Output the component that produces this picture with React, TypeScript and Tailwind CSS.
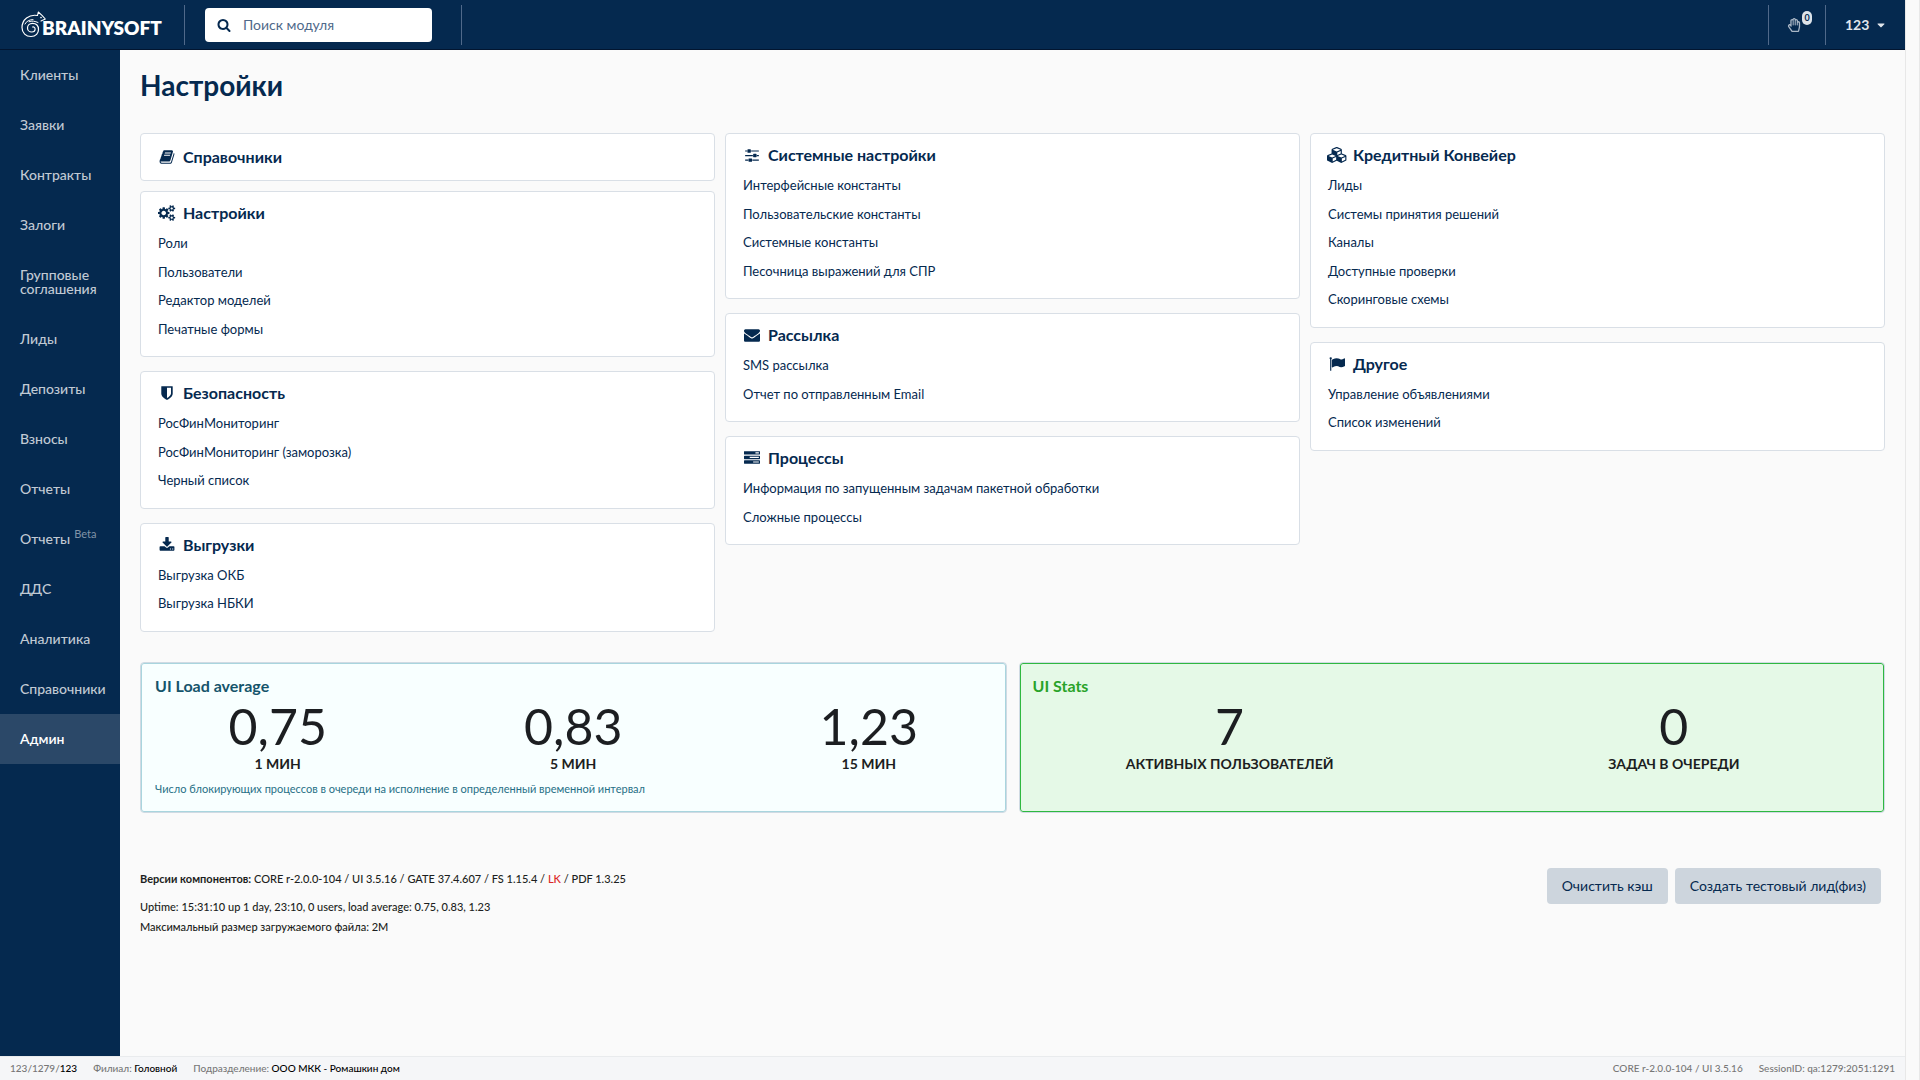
import { FaCaretDown, FaRegHandPaper } from 'react-icons/fa'

interface IconShape {
  viewBox: string
  path: string
}

interface Section {
  title: string
  icon: IconShape
  links: string[]
}

interface Stat {
  value: string
  label: string
}

const icons = {
  search: {
    viewBox: '0 0 1792 1792',
    path: 'M1216 832q0-185-131.5-316.5t-316.5-131.5-316.5 131.5-131.5 316.5 131.5 316.5 316.5 131.5 316.5-131.5 131.5-316.5zm512 832q0 52-38 90t-90 38q-54 0-90-38l-343-342q-179 124-399 124-143 0-273.5-55.5t-225-150-150-225-55.5-273.5 55.5-273.5 150-225 225-150 273.5-55.5 273.5 55.5 225 150 150 225 55.5 273.5q0 220-124 399l343 343q37 37 37 90z',
  },
  book: {
    viewBox: '0 0 1792 1792',
    path: 'M1703 478q40 57 18 129l-275 906q-19 64-76.5 107.5t-122.5 43.5h-923q-77 0-148.5-53.5t-99.5-131.5q-24-67-2-127 0-4 3-27t4-37q1-8-3-21.5t-3-19.5q2-11 8-21t16.5-23.5 16.5-23.5q23-38 45-91.5t30-91.5q3-10 .5-30t-.5-28q3-11 17-28t17-23q21-36 42-92t25-90q1-9-2.5-32t.5-28q4-13 22-30.5t22-22.5q19-26 42.5-84.5t27.5-96.5q1-8-3-25.5t-2-26.5q2-8 9-18t18-23 17-21q8-12 16.5-30.5t15-35 16-36 19.5-32 26.5-23.5 36-11.5 47.5 5.5l-1 3q38-9 51-9h761q74 0 114 56t18 130l-274 906q-36 119-71.5 153.5t-128.5 34.5h-869q-27 0-38 15-11 16-1 43 24 70 144 70h923q29 0 56-15.5t35-41.5l300-987q7-22 5-57 38 15 59 43zm-1064 2q-4 13 2 22.5t20 9.5h608q13 0 25.5-9.5t16.5-22.5l21-64q4-13-2-22.5t-20-9.5h-608q-13 0-25.5 9.5t-16.5 22.5zm-83 256q-4 13 2 22.5t20 9.5h608q13 0 25.5-9.5t16.5-22.5l21-64q4-13-2-22.5t-20-9.5h-608q-13 0-25.5 9.5t-16.5 22.5z',
  },
  cogs: {
    viewBox: '0 0 1920 1792',
    path: 'M896 896q0-106-75-181t-181-75-181 75-75 181 75 181 181 75 181-75 75-181zm768 512q0-52-38-90t-90-38-90 38-38 90q0 53 37.5 90.5t90.5 37.5 90.5-37.5 37.5-90.5zm0-1024q0-52-38-90t-90-38-90 38-38 90q0 53 37.5 90.5t90.5 37.5 90.5-37.5 37.5-90.5zm-384 421v185q0 10-7 19.5t-16 10.5l-155 24q-11 35-32 76 34 48 90 115 7 11 7 20 0 12-7 19-23 30-82.5 89.5t-78.5 59.5q-11 0-21-7l-115-90q-37 19-77 31-11 108-23 155-7 24-30 24h-186q-11 0-20-7.5t-10-17.5l-23-153q-34-10-75-31l-118 89q-7 7-20 7-11 0-21-8-144-133-144-160 0-9 7-19 10-14 41-53t47-61q-23-44-35-82l-152-24q-10-1-17-9.5t-7-19.5v-185q0-10 7-19.5t16-10.5l155-24q11-35 32-76-34-48-90-115-7-11-7-20 0-12 7-20 22-30 82-89t79-59q11 0 21 7l115 90q34-18 77-32 11-108 23-154 7-24 30-24h186q11 0 20 7.5t10 17.5l23 153q34 10 75 31l118-89q8-7 20-7 11 0 21 8 144 133 144 160 0 8-7 19-12 16-42 54t-45 60q23 48 34 82l152 23q10 2 17 10.5t7 19.5zm640 533v140q0 16-149 31-12 27-30 52 51 113 51 138 0 4-4 7-122 71-124 71-8 0-46-47t-52-68q-20 2-30 2t-30-2q-14 21-52 68t-46 47q-2 0-124-71-4-3-4-7 0-25 51-138-18-25-30-52-149-15-149-31v-140q0-16 149-31 13-29 30-52-51-113-51-138 0-4 4-7 4-2 35-20t59-34 30-16q8 0 46 46.5t52 67.5q20-2 30-2t30 2q51-71 92-112l6-2q4 0 124 70 4 3 4 7 0 25-51 138 17 23 30 52 149 15 149 31zm0-1024v140q0 16-149 31-12 27-30 52 51 113 51 138 0 4-4 7-122 71-124 71-8 0-46-47t-52-68q-20 2-30 2t-30-2q-14 21-52 68t-46 47q-2 0-124-71-4-3-4-7 0-25 51-138-18-25-30-52-149-15-149-31v-140q0-16 149-31 13-29 30-52-51-113-51-138 0-4 4-7 4-2 35-20t59-34 30-16q8 0 46 46.5t52 67.5q20-2 30-2t30 2q51-71 92-112l6-2q4 0 124 70 4 3 4 7 0 25-51 138 17 23 30 52 149 15 149 31z',
  },
  shield: {
    viewBox: '0 0 1792 1792',
    path: 'M1344 960v-640h-448v1137q119-63 213-137 235-184 235-360zm192-768v768q0 86-33.5 170.5t-83 150-118 127.5-126.5 103-121 77.5-89.5 49.5-42.5 20q-12 6-26 6t-26-6q-16-7-42.5-20t-89.5-49.5-121-77.5-126.5-103-118-127.5-83-150-33.5-170.5v-768q0-26 19-45t45-19h1152q26 0 45 19t19 45z',
  },
  download: {
    viewBox: '0 0 1792 1792',
    path: 'M1344 1344q0-26-19-45t-45-19-45 19-19 45 19 45 45 19 45-19 19-45zm256 0q0-26-19-45t-45-19-45 19-19 45 19 45 45 19 45-19 19-45zm128-224v320q0 40-28 68t-68 28h-1472q-40 0-68-28t-28-68v-320q0-40 28-68t68-28h465l135 136q58 56 136 56t136-56l136-136h464q40 0 68 28t28 68zm-325-569q17 41-14 70l-448 448q-18 19-45 19t-45-19l-448-448q-31-29-14-70 17-39 59-39h256v-448q0-26 19-45t45-19h256q26 0 45 19t19 45v448h256q42 0 59 39z',
  },
  sliders: {
    viewBox: '0 0 1792 1792',
    path: 'M480 1408v128h-352v-128h352zm352-128q26 0 45 19t19 45v256q0 26-19 45t-45 19h-256q-26 0-45-19t-19-45v-256q0-26 19-45t45-19h256zm160-384v128h-864v-128h864zm-640-512v128h-224v-128h224zm1312 1024v128h-736v-128h736zm-960-1152q26 0 45 19t19 45v256q0 26-19 45t-45 19h-256q-26 0-45-19t-19-45v-256q0-26 19-45t45-19h256zm640 512q26 0 45 19t19 45v256q0 26-19 45t-45 19h-256q-26 0-45-19t-19-45v-256q0-26 19-45t45-19h256zm320 128v128h-224v-128h224zm0-512v128h-864v-128h864z',
  },
  envelope: {
    viewBox: '0 0 1792 1792',
    path: 'M1792 710v794q0 66-47 113t-113 47h-1472q-66 0-113-47t-47-113v-794q44 49 101 87 362 246 497 345 57 42 92.5 65.5t94.5 48 110 24.5h2q51 0 110-24.5t94.5-48 92.5-65.5q170-123 498-345 57-39 100-87zm0-294q0 79-49 151t-122 123q-376 261-468 325-10 7-42.5 30.5t-54 38-52 32.5-57.5 27-50 9h-2q-23 0-50-9t-57.5-27-52-32.5-54-38-42.5-30.5q-91-64-262-182.5t-205-142.5q-62-42-117-115.5t-55-136.5q0-78 41.5-130t118.5-52h1472q65 0 112.5 47t47.5 113z',
  },
  tasks: {
    viewBox: '0 0 1792 1792',
    path: 'M1024 1408h640v-128h-640v128zm-384-512h1024v-128h-1024v128zm640-512h384v-128h-384v128zm512 832v256q0 26-19 45t-45 19h-1664q-26 0-45-19t-19-45v-256q0-26 19-45t45-19h1664q26 0 45 19t19 45zm0-512v256q0 26-19 45t-45 19h-1664q-26 0-45-19t-19-45v-256q0-26 19-45t45-19h1664q26 0 45 19t19 45zm0-512v256q0 26-19 45t-45 19h-1664q-26 0-45-19t-19-45v-256q0-26 19-45t45-19h1664q26 0 45 19t19 45z',
  },
  cubes: {
    viewBox: '0 0 2304 1792',
    path: 'M640 1632l384-192v-314l-384 164v342zm-64-454l404-173-404-173-404 173zm1088 454l384-192v-314l-384 164v342zm-64-454l404-173-404-173-404 173zm-448-293l384-165v-266l-384 164v267zm-64-379l441-189-441-189-441 189zm1088 518v416q0 36-19 67t-52 47l-448 224q-25 14-57 14t-57-14l-448-224q-4-2-7-4-2 2-7 4l-448 224q-25 14-57 14t-57-14l-448-224q-33-16-52-47t-19-67v-416q0-38 21.5-70t56.5-48l434-186v-400q0-38 21.5-70t56.5-48l448-192q23-10 50-10t50 10l448 192q35 16 56.5 48t21.5 70v400l434 186q36 16 57 48t21 70z',
  },
  flag: {
    viewBox: '0 0 1792 1792',
    path: 'M320 256q0 72-64 110v1266q0 13-9.5 22.5t-22.5 9.5h-64q-13 0-22.5-9.5t-9.5-22.5v-1266q-64-38-64-110 0-53 37.5-90.5t90.5-37.5 90.5 37.5 37.5 90.5zm1472 64v763q0 25-12.5 38.5t-39.5 27.5q-215 116-369 116-61 0-123.5-22t-108.5-48-115.5-48-142.5-22q-192 0-464 146-17 9-33 9-26 0-45-19t-19-45v-742q0-32 31-55 21-14 79-43 236-120 421-120 107 0 200 29t219 88q38 19 88 19 54 0 117.5-21t110-47 88-47 54.5-21q26 0 45 19t19 45z',
  },
}

const navItems = [
  'Клиенты',
  'Заявки',
  'Контракты',
  'Залоги',
  'Групповые соглашения',
  'Лиды',
  'Депозиты',
  'Взносы',
  'Отчеты',
  'Отчеты Beta',
  'ДДС',
  'Аналитика',
  'Справочники',
  'Админ',
]

const columns: Section[][] = [
  [
    { title: 'Справочники', icon: icons.book, links: [] },
    {
      title: 'Настройки',
      icon: icons.cogs,
      links: ['Роли', 'Пользователи', 'Редактор моделей', 'Печатные формы'],
    },
    {
      title: 'Безопасность',
      icon: icons.shield,
      links: ['РосФинМониторинг', 'РосФинМониторинг (заморозка)', 'Черный список'],
    },
    { title: 'Выгрузки', icon: icons.download, links: ['Выгрузка ОКБ', 'Выгрузка НБКИ'] },
  ],
  [
    {
      title: 'Системные настройки',
      icon: icons.sliders,
      links: [
        'Интерфейсные константы',
        'Пользовательские константы',
        'Системные константы',
        'Песочница выражений для СПР',
      ],
    },
    {
      title: 'Рассылка',
      icon: icons.envelope,
      links: ['SMS рассылка', 'Отчет по отправленным Email'],
    },
    {
      title: 'Процессы',
      icon: icons.tasks,
      links: ['Информация по запущенным задачам пакетной обработки', 'Сложные процессы'],
    },
  ],
  [
    {
      title: 'Кредитный Конвейер',
      icon: icons.cubes,
      links: [
        'Лиды',
        'Системы принятия решений',
        'Каналы',
        'Доступные проверки',
        'Скоринговые схемы',
      ],
    },
    {
      title: 'Другое',
      icon: icons.flag,
      links: ['Управление объявлениями', 'Список изменений'],
    },
  ],
]

const loadStats: Stat[] = [
  { value: '0,75', label: '1 МИН' },
  { value: '0,83', label: '5 МИН' },
  { value: '1,23', label: '15 МИН' },
]

const uiStats: Stat[] = [
  { value: '7', label: 'АКТИВНЫХ ПОЛЬЗОВАТЕЛЕЙ' },
  { value: '0', label: 'ЗАДАЧ В ОЧЕРЕДИ' },
]

function Icon({ shape, className }: { shape: IconShape; className: string }) {
  return (
    <svg viewBox={shape.viewBox} fill="currentColor" aria-hidden="true" className={className}>
      <path d={shape.path} />
    </svg>
  )
}

function Logo() {
  return (
    <a href="#" className="flex w-[142px] items-end text-white">
      {/* chameleon with a curled tail */}
      <svg
        viewBox="0 0 25 27"
        fill="none"
        stroke="currentColor"
        strokeLinecap="round"
        strokeLinejoin="round"
        aria-hidden="true"
        className="-mr-1 h-[27px] w-[25px] shrink-0"
      >
        <path
          strokeWidth="1.2"
          d="M16.500 4.500C8 3 1 8.500 1 16.500C1 22 5 25.500 10 25.500C15 25.500 17.500 22 17.500 18.500C17.500 14.500 15 12.300 11.500 12.300C8.500 12.300 6.500 14.400 6.500 16.900C6.500 19.400 8.500 21 10.800 21C13 21 14.100 19.500 14.100 18C14.100 16.600 13 15.700 11.600 16"
        />
        <path strokeWidth="1.1" d="M16.500 4.500L17.300 1L21 4.300L24.300 8L20 10" />
        <path strokeWidth="1" d="M4 13C5.500 10 8.500 8.600 12 8.600M8 10.700C11 9.500 14 10.200 17 11.500" />
        <circle cx="20" cy="6.600" r="0.800" fill="currentColor" stroke="none" />
      </svg>
      <span className="text-[19px]/5 font-extrabold">BRAINYSOFT</span>
    </a>
  )
}

function Header() {
  return (
    <header className="flex h-[50px] items-center border-b border-[#021530] bg-[#05294f] pl-[21px]">
      <Logo />
      <div className="ml-[21px] h-10 w-px bg-[#50698a]" />
      <label className="ml-5 flex h-[34px] w-[227px] items-center rounded bg-white pl-3">
        <Icon shape={icons.search} className="h-[14px] w-[14px] text-[#05294f]" />
        <input
          type="text"
          aria-label="Поиск модуля"
          placeholder="Поиск модуля"
          className="ml-3 min-w-0 flex-1 text-sm text-[#05294f] outline-none placeholder:text-[#50698a]"
        />
      </label>
      <div className="ml-[29px] h-10 w-px bg-[#50698a]" />
      <div className="ml-auto flex h-10 items-center">
        <button
          type="button"
          aria-label="Уведомления"
          className="relative flex h-10 w-[57px] items-center border-l border-[#50698a] pl-[18px]"
        >
          <FaRegHandPaper className="h-[14px] w-[14px] text-[#a9b6c5]" />
          <span className="absolute top-[6px] left-[33px] flex h-[14px] w-[10px] items-center justify-center rounded-full bg-[#dde3ea] text-[9px] font-bold text-[#05294f]">
            0
          </span>
        </button>
        <button
          type="button"
          className="flex h-10 w-20 items-center gap-[6px] border-l border-[#50698a] pl-[19px] text-sm font-bold text-[#e1e6ec]"
        >
          123
          <FaCaretDown className="h-3 w-3" />
        </button>
      </div>
    </header>
  )
}

function Sidebar() {
  return (
    <nav className="w-[120px] shrink-0 bg-[#05294f]">
      {navItems.map((item) => (
        <a
          key={item}
          href="#"
          className={
            item === 'Админ'
              ? 'flex items-center bg-[#2b4868] px-5 py-[18px] text-sm/[14px] font-semibold text-white'
              : 'flex items-center px-5 py-[18px] text-sm/[14px] font-medium text-[#c1cad4]'
          }
        >
          {item === 'Отчеты Beta' ? (
            <>
              Отчеты
              <sup className="ml-1 text-[11px]/[14px] font-normal text-[#8294a8]">Beta</sup>
            </>
          ) : (
            item
          )}
        </a>
      ))}
    </nav>
  )
}

function SectionCard({ section }: { section: Section }) {
  const isPlain = section.links.length === 0

  return (
    <section
      className={
        isPlain
          ? 'mb-[10px] rounded border border-[#d9dfe6] bg-white px-[17px] py-[11px]'
          : 'mb-[14px] rounded border border-[#d9dfe6] bg-white px-[17px] pt-[9px] pb-3'
      }
    >
      <h2 className="flex items-center gap-[7px] text-base font-bold">
        <span className="flex w-[18px] shrink-0 justify-center">
          <Icon shape={section.icon} className="h-4 w-auto shrink-0" />
        </span>
        {isPlain ? <a href="#">{section.title}</a> : section.title}
      </h2>
      {!isPlain && (
        <ul className="mt-[5px] text-[13px] leading-normal">
          {section.links.map((link) => (
            <li key={link} className="pt-1 pb-[5px]">
              <a href="#">{link}</a>
            </li>
          ))}
        </ul>
      )}
    </section>
  )
}

function StatRow({ stats }: { stats: Stat[] }) {
  return (
    <div className="-mx-[25px] flex text-center text-[#1c1e21]">
      {stats.map((stat) => (
        <div key={stat.label} className="flex-1">
          <p className="text-[50px]/[56px]">{stat.value}</p>
          <p className="text-sm/5 font-bold">{stat.label}</p>
        </div>
      ))}
    </div>
  )
}

export default function App() {
  return (
    <div className="flex min-h-screen bg-[#fafafa] font-['Lato',sans-serif] text-[#05294f]">
      <div className="flex min-w-0 flex-1 flex-col">
        <Header />

        <div className="flex flex-1">
          <Sidebar />

          <main className="min-w-0 flex-1 px-5 pt-[17px]">
            <h1 className="text-[28px]/9 font-bold">Настройки</h1>

            <div className="mt-[30px] grid grid-cols-3 gap-[10px]">
              {columns.map((column) => (
                <div key={column[0].title}>
                  {column.map((section) => (
                    <SectionCard key={section.title} section={section} />
                  ))}
                </div>
              ))}
            </div>

            <div className="mt-4 grid grid-cols-2 gap-3">
              <section className="overflow-hidden rounded border border-[#d0dae3] bg-[#f8ffff] px-[14px] pt-[11px] pb-[15px] shadow-[inset_0_0_0_1px_#a9d5de]">
                <h2 className="text-base font-bold text-[#15546b]">UI Load average</h2>
                <StatRow stats={loadStats} />
                <p className="mt-[7px] text-[11px]/4 text-[#276f86]">
                  Число блокирующих процессов в очереди на исполнение в определенный временной
                  интервал
                </p>
              </section>
              <section className="overflow-hidden rounded border border-[#d0dae3] bg-[#e5f9e7] px-[13px] pt-[11px] shadow-[inset_0_0_0_1px_#2eb840]">
                <h2 className="text-base font-bold text-[#29a329]">UI Stats</h2>
                <StatRow stats={uiStats} />
              </section>
            </div>

            <div className="mt-[55px] flex items-start justify-between pr-1">
              <div className="pt-[3px] text-[11px]/4 font-medium text-[#1c1e21]">
                <p>
                  <b className="font-bold">Версии компонентов:</b> CORE r-2.0.0-104 / UI 3.5.16 /
                  GATE 37.4.607 / FS 1.15.4 / <span className="text-[#db2828]">LK</span> / PDF
                  1.3.25
                </p>
                <p className="mt-[10px] leading-5">
                  Uptime: 15:31:10 up 1 day, 23:10, 0 users, load average: 0.75, 0.83, 1.23
                </p>
                <p className="leading-5">Максимальный размер загружаемого файла: 2M</p>
              </div>
              <div className="flex gap-[7px] text-sm">
                <button type="button" className="h-9 rounded bg-[#cdd5dd] px-[15px]">
                  Очистить кэш
                </button>
                <button type="button" className="h-9 rounded bg-[#cdd5dd] px-[15px]">
                  Создать тестовый лид(физ)
                </button>
              </div>
            </div>
          </main>
        </div>

        <footer className="flex h-6 items-center gap-4 border-t border-[#e9ebed] bg-[#f5f6f8] px-[10px] text-[10px] font-medium text-[#777]">
          <span>
            123/1279/<span className="text-black">123</span>
          </span>
          <span>
            Филиал: <span className="text-black">Головной</span>
          </span>
          <span>
            Подразделение: <span className="text-black">ООО МКК - Ромашкин дом</span>
          </span>
          <span className="ml-auto">CORE r-2.0.0-104 / UI 3.5.16</span>
          <span>SessionID: qa:1279:2051:1291</span>
        </footer>
      </div>

      <div className="w-[15px] shrink-0 border-x border-[#e8e8e8]" />
    </div>
  )
}
